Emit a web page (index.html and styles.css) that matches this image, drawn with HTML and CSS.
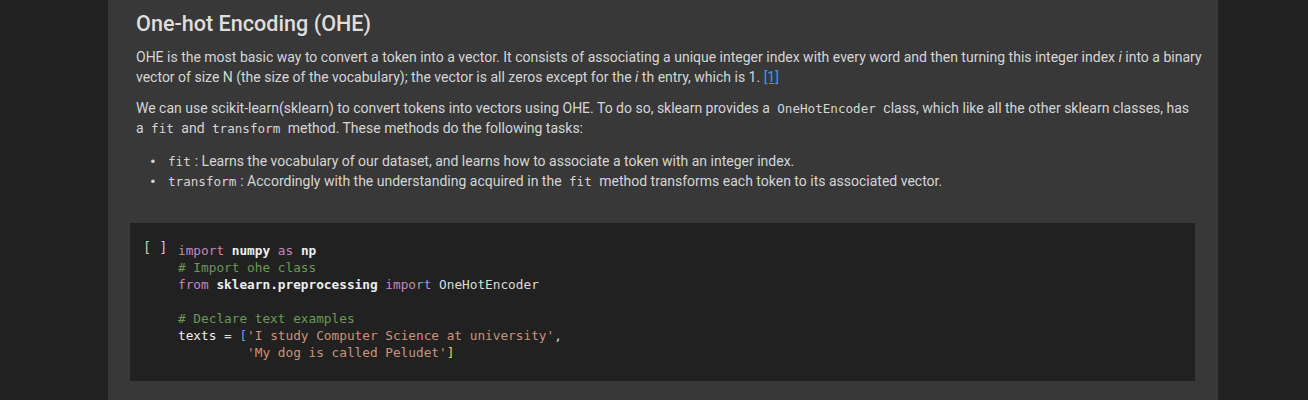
FILE: index.html
```html
<!DOCTYPE html>
<html>
<head>
<meta charset="utf-8">
<link rel="stylesheet" href="styles.css">
</head>
<body>
<div class="page">
  <div class="panel">
    <div class="md">
      <h2 class="title">One-hot Encoding (OHE)</h2>
      <p>OHE is the most basic way to convert a token into a vector. It consists of associating a unique integer index with every word and then turning this integer index <i>i</i> into a binary vector of size N (the size of the vocabulary); the vector is all zeros except for the <i>i</i> th entry, which is 1. <a class="ref" href="#">[1]</a></p>
      <p>We can use scikit-learn(sklearn) to convert tokens into vectors using OHE. To do so, sklearn provides a <code>OneHotEncoder</code> class, which like all the other sklearn classes, has a&nbsp;<code>fit</code> and <code>transform</code> method. These methods do the following tasks:</p>
      <ul class="list">
        <li><code class="lead">fit</code>: Learns the vocabulary of our dataset, and learns how to associate a token with an integer index.</li>
        <li><code class="lead">transform</code>: Accordingly with the understanding acquired in the <code>fit</code> method transforms each token to its associated vector.</li>
      </ul>
    </div>
    <div class="cell">
      <div class="run">[ ]</div>
<pre class="code"><span class="kw">import</span> <span class="mod">numpy</span> <span class="kw">as</span> <span class="mod">np</span>
<span class="cm"># Import ohe class</span>
<span class="kw">from</span> <span class="mod">sklearn.preprocessing</span> <span class="kw">import</span> OneHotEncoder

<span class="cm"># Declare text examples</span>
<span class="var">texts</span> = <span class="br1">[</span><span class="str">'I study Computer Science at university'</span>,
         <span class="str">'My dog is called Peludet'</span><span class="br2">]</span></pre>
    </div>
  </div>
</div>
</body>
</html>
```

FILE: styles.css
```css
html, body {
  margin: 0;
  padding: 0;
  background: #212121;
  height: 100%;
}
.page {
  display: flex;
  height: 400px;
  overflow: hidden;
}
.panel {
  margin-left: 108px;
  width: 1110px;
  background: #383838;
  height: 400px;
  box-sizing: border-box;
  padding: 0 23px 0 22px;
}
.md {
  padding: 0 0 0 6px;
  margin-right: -14px;
  font-family: Roboto, "Liberation Sans", sans-serif;
  font-size: 14px;
  line-height: 20px;
  color: #d5d5d5;
}
.title {
  margin: 0;
  padding-top: 10px;
  font-size: 21.6px;
  line-height: 28px;
  font-weight: 500;
  color: #dedede;
}
.md p {
  margin: 9px 0 11px 0;
}
.md i {
  font-style: italic;
}
.ref {
  color: #3c9af0;
  text-decoration: underline;
}
.md code {
  font-family: "DejaVu Sans Mono", monospace;
  font-size: 12.6px;
  line-height: 1;
  padding: 0 4px;
  color: #d5d5d5;
}
.md code.lead {
  padding: 0 4px 0 0;
}
.list {
  margin: 13px 0 0 0;
  padding-left: 32px;
  list-style: none;
}
.list li {
  line-height: 20px;
  height: 20px;
}
.list li::before {
  content: "\2022";
  display: inline-block;
  width: 18px;
  margin-left: -18px;
  font-size: 17px;
  line-height: 1;
  vertical-align: -1px;
}
.cell {
  margin-top: 32px;
  background: #212121;
  display: flex;
  padding: 19px 0 20px 0;
  height: 158px;
  box-sizing: border-box;
}
.run {
  width: 48px;
  padding-left: 13px;
  box-sizing: border-box;
  font-family: "DejaVu Sans Mono", monospace;
  font-size: 13.5px;
  line-height: 17px;
  color: #c8c8c8;
  margin-top: -3px;
}
.code {
  margin: 0;
  font-family: "DejaVu Sans Mono", monospace;
  font-size: 12.75px;
  line-height: 17px;
  color: #dcdcdc;
}
.kw { color: #c586c0; }
.mod { color: #eeeeee; font-weight: bold; }
.cm { color: #6a9955; }
.str { color: #ce9178; }
.var { color: #eeeeee; }
.br1 { color: #4fa3f0; }
.br2 { color: #e8c85a; }
```
